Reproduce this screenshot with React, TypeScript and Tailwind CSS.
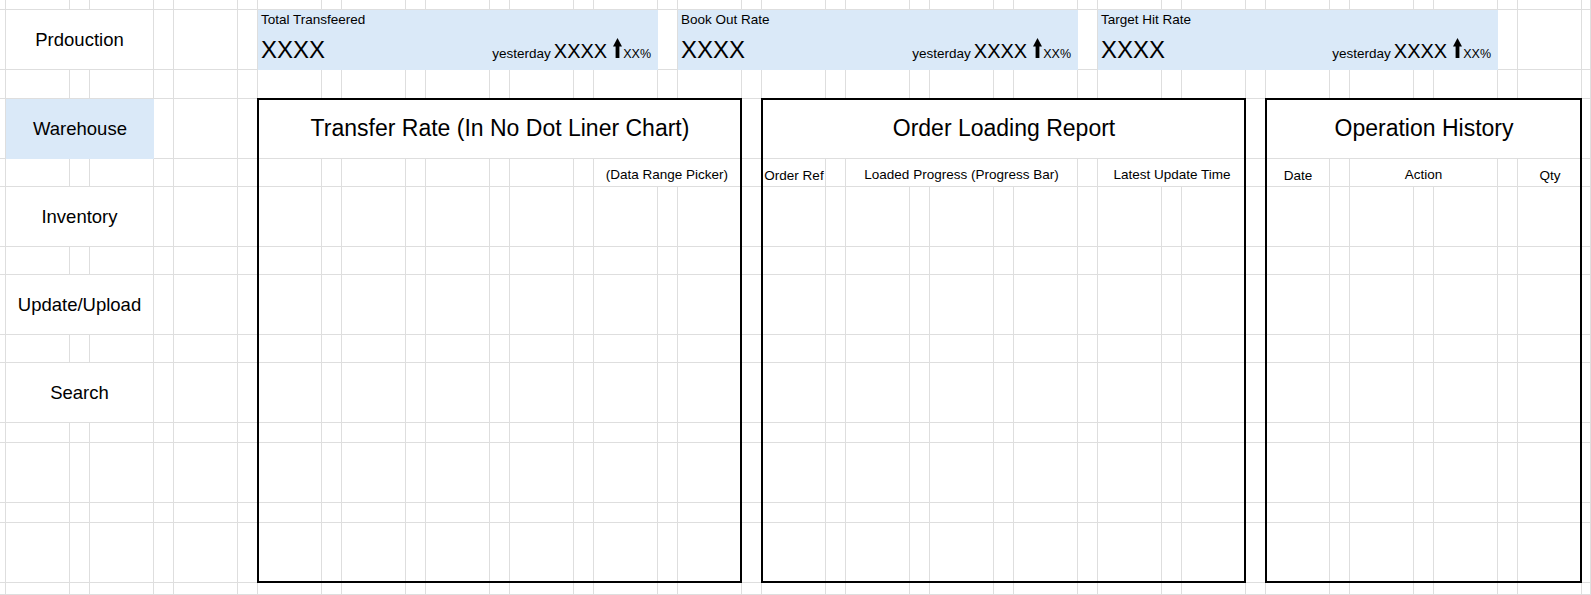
import React from "react";

const ROWS = 15;
const COLS = 39;
const line = "border-[#dedede]";

function UpArrow() {
  return (
    <svg width="9" height="20" viewBox="0 0 9 20" className="mx-[1px]">
      <polygon points="4.5,0 9,8.5 6.4,8.5 6.4,20 2.6,20 2.6,8.5 0,8.5" fill="#000" />
    </svg>
  );
}

function Kpi({ title, className }: { title: string; className: string }) {
  return (
    <div className={`row-start-2 flex flex-col bg-[#dae9f8] pl-[3px] pr-[7px] ${className}`}>
      <div className="pt-[2px] text-[13.5px] leading-4">{title}</div>
      <div className="mt-auto flex items-baseline justify-between pb-[8px]">
        <span className="text-[24px] leading-6">XXXX</span>
        <span className="flex items-baseline">
          <span className="text-[13.5px] leading-none">yesterday</span>
          <span className="ml-[3px] text-[20px] leading-none">XXXX</span>
          <span className="ml-[5px]">
            <UpArrow />
          </span>
          <span className="text-[12.5px] leading-none">XX%</span>
        </span>
      </div>
    </div>
  );
}

function Nav({ label, row, active }: { label: string; row: string; active?: boolean }) {
  return (
    <div
      className={`col-start-2 col-span-3 ${row} flex items-center justify-center text-[18.5px] ${
        active ? "bg-[#dae9f8]" : `border-r border-b ${line} bg-white`
      }`}
    >
      {label}
    </div>
  );
}

export default function App() {
  const cells = Array.from({ length: ROWS * COLS }, (_, i) => ({
    r: Math.floor(i / COLS) + 1,
    c: (i % COLS) + 1,
  }));

  return (
    <div
      className="grid h-[595px] w-[1591px] overflow-hidden bg-white text-black grid-cols-[6px_repeat(18,64px_20px)_64px_1fr] grid-rows-[10px_60px_29px_60px_28px_60px_28px_60px_28px_60px_20px_60px_20px_60px_1fr]"
      style={{ fontFamily: '"Liberation Sans", Arial, sans-serif' }}
    >
      {/* sheet gridlines */}
      {cells.map(({ r, c }) => (
        <div
          key={`${r}-${c}`}
          className={`border-r border-b ${line}`}
          style={{ gridRow: r, gridColumn: c }}
        />
      ))}

      {/* left menu */}
      <Nav label="Prdouction" row="row-start-2" />
      <Nav label="Warehouse" row="row-start-4" active />
      <Nav label="Inventory" row="row-start-6" />
      <Nav label="Update/Upload" row="row-start-8" />
      <Nav label="Search" row="row-start-10" />

      {/* kpis */}
      <Kpi title="Total Transfeered" className="col-start-8 col-span-9" />
      <Kpi title="Book Out Rate" className="col-start-18 col-span-9" />
      <Kpi title="Target Hit Rate" className="col-start-28 col-span-9" />

      {/* panel titles */}
      <div className={`col-start-8 col-span-11 row-start-4 flex items-center justify-center border-b ${line} bg-white text-[23px]`}>
        Transfer Rate (In No Dot Liner Chart)
      </div>
      <div className={`col-start-20 col-span-11 row-start-4 flex items-center justify-center border-b ${line} bg-white text-[23px]`}>
        Order Loading Report
      </div>
      <div className={`col-start-32 col-span-7 row-start-4 flex items-center justify-center border-b ${line} bg-white text-[23px]`}>
        Operation History
      </div>

      {/* column headers */}
      <div className={`col-start-16 col-span-3 row-start-5 flex items-end justify-end border-b ${line} bg-white pb-[1px] pr-[14px] text-[13.5px] whitespace-nowrap`}>
        (Data Range Picker)
      </div>
      <div className="col-start-20 row-start-5 flex items-end justify-center pb-[1px] text-[13.5px] whitespace-nowrap">
        Order Ref
      </div>
      <div className={`col-start-22 col-span-5 row-start-5 flex items-end justify-center border-r border-b ${line} bg-white pb-[1px] text-[13.5px] whitespace-nowrap`}>
        Loaded Progress (Progress Bar)
      </div>
      <div className={`col-start-28 col-span-3 row-start-5 flex items-end justify-center border-b ${line} bg-white pb-[1px] text-[13.5px] whitespace-nowrap`}>
        Latest Update Time
      </div>
      <div className="col-start-32 row-start-5 flex items-end justify-center pb-[1px] text-[13.5px]">
        Date
      </div>
      <div className={`col-start-34 col-span-3 row-start-5 flex items-end justify-center border-r border-b ${line} bg-white pb-[1px] text-[13.5px]`}>
        Action
      </div>
      <div className="col-start-38 row-start-5 flex items-end justify-center pb-[1px] text-[13.5px]">
        Qty
      </div>

      {/* panel frames */}
      <div className="pointer-events-none col-start-8 col-span-11 row-start-4 row-span-11 -ml-px -mt-px border-2 border-black" />
      <div className="pointer-events-none col-start-20 col-span-11 row-start-4 row-span-11 -ml-px -mt-px border-2 border-black" />
      <div className="pointer-events-none col-start-32 col-span-7 row-start-4 row-span-11 -ml-px -mt-px border-2 border-black" />
    </div>
  );
}
